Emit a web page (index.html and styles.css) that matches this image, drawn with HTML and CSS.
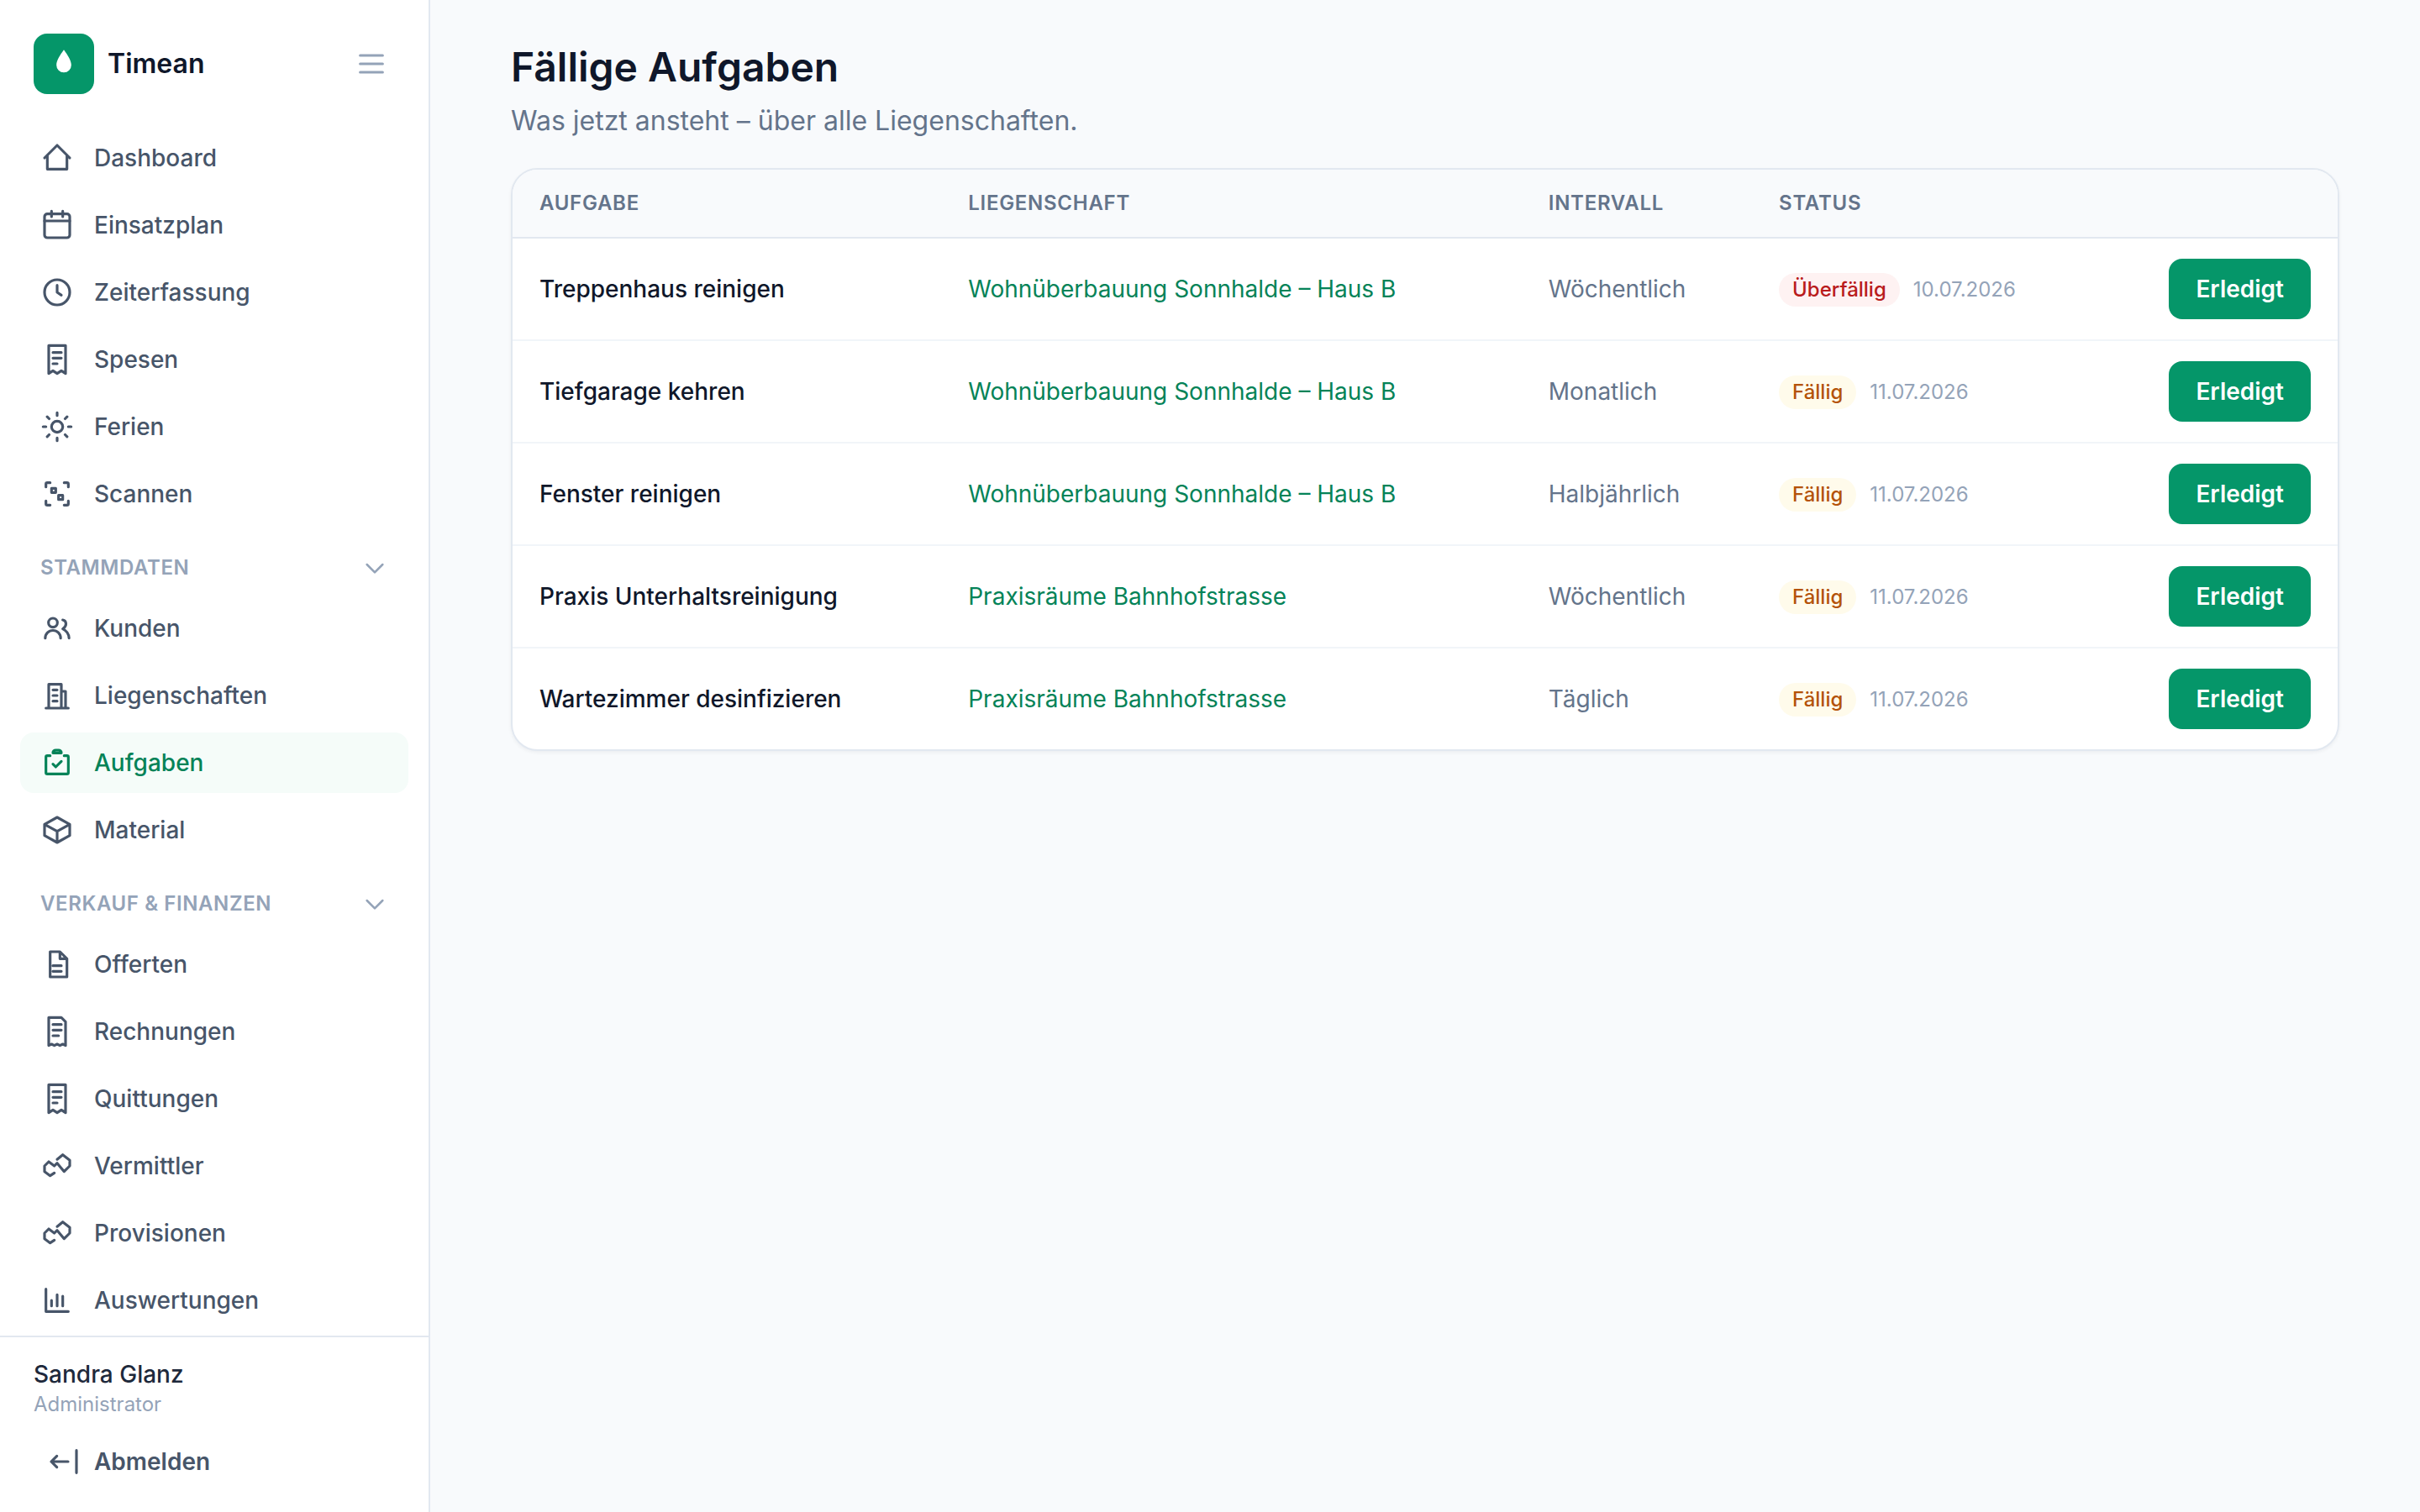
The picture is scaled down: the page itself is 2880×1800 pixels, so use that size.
FILE: index.html
```html
<!DOCTYPE html>
<html lang="de">

<head>
    <meta charset="UTF-8">
    <meta name="viewport" content="width=device-width, initial-scale=1.0">
    <title>Fällige Aufgaben – Timean</title>
    <link rel="stylesheet" href="styles.css">
</head>

<body>
    <div class="app">
        <aside class="sidebar">
            <div class="brand">
                <span class="brand-logo">
                    <svg viewBox="0 0 24 24"><path d="M12 2c2.8 4 5.3 7.5 5.3 10.9a5.3 5.3 0 0 1-10.6 0C6.7 9.5 9.2 6 12 2z"/></svg>
                </span>
                <span class="brand-name">Timean</span>
                <svg class="icon brand-toggle" viewBox="0 0 24 24"><path d="M4 6h16M4 12h16M4 18h16"/></svg>
            </div>
            <nav class="nav">
                <a class="nav-item">
                    <svg class="icon" viewBox="0 0 24 24"><path d="M3 12l9-9 9 9M5 10v10h14V10"/></svg>
                    Dashboard
                </a>
                <a class="nav-item">
                    <svg class="icon" viewBox="0 0 24 24"><rect x="3" y="4" width="18" height="17" rx="2"/><path d="M8 2v4M16 2v4M3 9h18"/></svg>
                    Einsatzplan
                </a>
                <a class="nav-item">
                    <svg class="icon" viewBox="0 0 24 24"><circle cx="12" cy="12" r="9"/><path d="M12 7v5l3 2"/></svg>
                    Zeiterfassung
                </a>
                <a class="nav-item">
                    <svg class="icon" viewBox="0 0 24 24"><path d="M6 2h12v20l-3-2-3 2-3-2-3 2zM9 7h6M9 11h6M9 15h3"/></svg>
                    Spesen
                </a>
                <a class="nav-item">
                    <svg class="icon" viewBox="0 0 24 24"><circle cx="12" cy="12" r="4"/><path d="M12 2v2M12 20v2M2 12h2M20 12h2M4.9 4.9l1.4 1.4M17.7 17.7l1.4 1.4M4.9 19.1l1.4-1.4M17.7 6.3l1.4-1.4"/></svg>
                    Ferien
                </a>
                <a class="nav-item">
                    <svg class="icon" viewBox="0 0 24 24"><path d="M4 7V5a1 1 0 0 1 1-1h2M17 4h2a1 1 0 0 1 1 1v2M20 17v2a1 1 0 0 1-1 1h-2M7 20H5a1 1 0 0 1-1-1v-2M8 8h3v3H8zM13 13h3v3h-3z"/></svg>
                    Scannen
                </a>

                <div class="nav-section">
                    Stammdaten
                    <svg class="icon" viewBox="0 0 24 24"><path d="M5 9l7 7 7-7"/></svg>
                </div>
                <a class="nav-item">
                    <svg class="icon" viewBox="0 0 24 24"><circle cx="9" cy="8" r="3.2"/><path d="M3.5 19a5.5 5.5 0 0 1 11 0M16 6c1.5.3 2.3 1.4 2.3 2.8 0 1.7-.9 2.6-2.3 3.6 2.7 1.3 4.3 3.6 4.5 6.6"/></svg>
                    Kunden
                </a>
                <a class="nav-item">
                    <svg class="icon" viewBox="0 0 24 24"><path d="M4 21h16M6 21V4h9v17M15 9h3v12M9 8h3M9 12h3M9 16h3"/></svg>
                    Liegenschaften
                </a>
                <a class="nav-item active">
                    <svg class="icon" viewBox="0 0 24 24"><path d="M7 7H5a1 1 0 0 0-1 1v11a1 1 0 0 0 1 1h14a1 1 0 0 0 1-1V8a1 1 0 0 0-1-1h-2M9 5a2 2 0 0 1 2-2h2a2 2 0 0 1 2 2zM9 13l2 2 4-4"/></svg>
                    Aufgaben
                </a>
                <a class="nav-item">
                    <svg class="icon" viewBox="0 0 24 24"><path d="M12 3l9 5v8l-9 5-9-5V8zM3 8l9 5 9-5M12 13v8"/></svg>
                    Material
                </a>

                <div class="nav-section">
                    Verkauf &amp; Finanzen
                    <svg class="icon" viewBox="0 0 24 24"><path d="M5 9l7 7 7-7"/></svg>
                </div>
                <a class="nav-item">
                    <svg class="icon" viewBox="0 0 24 24"><path d="M14 3H7v18h12V8zM14 3v5h5M9 13h6M9 17h6"/></svg>
                    Offerten
                </a>
                <a class="nav-item">
                    <svg class="icon" viewBox="0 0 24 24"><path d="M6 2h9l3 3v17l-2-1-2 1-2-1-2 1-2-1-2 1zM9 7h6M9 11h6M9 15h4"/></svg>
                    Rechnungen
                </a>
                <a class="nav-item">
                    <svg class="icon" viewBox="0 0 24 24"><path d="M6 2h12v20l-3-2-3 2-3-2-3 2zM9 7h6M9 11h6M9 15h3"/></svg>
                    Quittungen
                </a>
                <a class="nav-item">
                    <svg class="icon" viewBox="0 0 24 24"><path d="M12 7.3L16 4l5 4v4l-4 4-5-6-2 2-4-3-3 3v4l4 3 3-2"/></svg>
                    Vermittler
                </a>
                <a class="nav-item">
                    <svg class="icon" viewBox="0 0 24 24"><path d="M12 7.3L16 4l5 4v4l-4 4-5-6-2 2-4-3-3 3v4l4 3 3-2"/></svg>
                    Provisionen
                </a>
                <a class="nav-item">
                    <svg class="icon" viewBox="0 0 24 24"><path d="M4 4v16h16M8 12v4M12 8v8M16 9v7"/></svg>
                    Auswertungen
                </a>
            </nav>
            <div class="user">
                <div class="user-name">Sandra Glanz</div>
                <div class="user-role">Administrator</div>
                <button class="logout">
                    <svg class="icon" viewBox="0 0 24 24"><path d="M15 12H3M7 8l-4 4 4 4M21 4v16"/></svg>
                    Abmelden
                </button>
            </div>
        </aside>

        <main class="main">
            <h1>Fällige Aufgaben</h1>
            <p class="subtitle">Was jetzt ansteht – über alle Liegenschaften.</p>
            <div class="card">
                <table>
                    <thead>
                        <tr>
                            <th>Aufgabe</th>
                            <th>Liegenschaft</th>
                            <th>Intervall</th>
                            <th>Status</th>
                            <th></th>
                        </tr>
                    </thead>
                    <tbody>
                        <tr>
                            <td class="task">Treppenhaus reinigen</td>
                            <td><a class="link">Wohnüberbauung Sonnhalde – Haus B</a></td>
                            <td class="interval">Wöchentlich</td>
                            <td><span class="status"><span class="badge overdue">Überfällig</span><span class="date">10.07.2026</span></span></td>
                            <td class="action"><button class="btn">Erledigt</button></td>
                        </tr>
                        <tr>
                            <td class="task">Tiefgarage kehren</td>
                            <td><a class="link">Wohnüberbauung Sonnhalde – Haus B</a></td>
                            <td class="interval">Monatlich</td>
                            <td><span class="status"><span class="badge due">Fällig</span><span class="date">11.07.2026</span></span></td>
                            <td class="action"><button class="btn">Erledigt</button></td>
                        </tr>
                        <tr>
                            <td class="task">Fenster reinigen</td>
                            <td><a class="link">Wohnüberbauung Sonnhalde – Haus B</a></td>
                            <td class="interval">Halbjährlich</td>
                            <td><span class="status"><span class="badge due">Fällig</span><span class="date">11.07.2026</span></span></td>
                            <td class="action"><button class="btn">Erledigt</button></td>
                        </tr>
                        <tr>
                            <td class="task">Praxis Unterhaltsreinigung</td>
                            <td><a class="link">Praxisräume Bahnhofstrasse</a></td>
                            <td class="interval">Wöchentlich</td>
                            <td><span class="status"><span class="badge due">Fällig</span><span class="date">11.07.2026</span></span></td>
                            <td class="action"><button class="btn">Erledigt</button></td>
                        </tr>
                        <tr>
                            <td class="task">Wartezimmer desinfizieren</td>
                            <td><a class="link">Praxisräume Bahnhofstrasse</a></td>
                            <td class="interval">Täglich</td>
                            <td><span class="status"><span class="badge due">Fällig</span><span class="date">11.07.2026</span></span></td>
                            <td class="action"><button class="btn">Erledigt</button></td>
                        </tr>
                    </tbody>
                </table>
            </div>
        </main>
    </div>
</body>

</html>
```
FILE: styles.css
```css
* {
    box-sizing: border-box;
}

body {
    margin: 0;
    background-color: #f8fafc;
    color: #0f172a;
    font-family: Inter, "Liberation Sans", sans-serif;
    font-size: 28px;
    line-height: 40px;
}

button {
    border: 0;
    font: inherit;
    font-weight: 600;
}

.app {
    display: flex;
    height: 100vh;
}

.icon {
    flex: none;
    width: 40px;
    height: 40px;
    fill: none;
    stroke: currentColor;
    stroke-width: 1.9;
    stroke-linecap: round;
    stroke-linejoin: round;
}

/* sidebar */
.sidebar {
    display: flex;
    flex: none;
    flex-direction: column;
    width: 512px;
    border-right: 2px solid #e2e8f0;
    background-color: #fff;
}

.brand {
    display: flex;
    align-items: center;
    gap: 16px;
    padding: 40px 48px 40px 40px;
}

.brand-logo {
    display: flex;
    align-items: center;
    justify-content: center;
    width: 72px;
    height: 72px;
    border-radius: 16px;
    background-color: #059669;
}

.brand-logo svg {
    width: 40px;
    height: 40px;
    fill: #fff;
}

.brand-name {
    font-size: 32px;
    font-weight: 600;
}

.brand-toggle {
    margin-left: auto;
    color: #94a3b8;
}

.nav {
    display: flex;
    flex: 1;
    flex-direction: column;
    gap: 8px;
    min-height: 0;
    padding: 0 24px;
    overflow: hidden;
}

.nav-item {
    display: flex;
    flex: none;
    align-items: center;
    gap: 24px;
    height: 72px;
    padding: 0 24px;
    border-radius: 16px;
    color: #475569;
    font-weight: 500;
}

.nav-item.active {
    background-color: #f5fcf9;
    color: #058358;
}

.nav-section {
    display: flex;
    flex: none;
    align-items: center;
    justify-content: space-between;
    height: 48px;
    margin: 20px 0 4px;
    padding: 0 24px;
    color: #94a3b8;
    font-size: 24px;
    font-weight: 600;
    letter-spacing: 0.025em;
    text-transform: uppercase;
}

.nav-section .icon {
    width: 32px;
    height: 32px;
}

.user {
    padding: 24px;
    border-top: 2px solid #e2e8f0;
}

.user-name {
    padding: 0 16px;
    color: #1e293b;
    font-weight: 500;
}

.user-role {
    padding: 0 16px;
    color: #94a3b8;
    font-size: 24px;
    line-height: 32px;
}

.logout {
    display: flex;
    align-items: center;
    gap: 16px;
    width: 100%;
    height: 72px;
    margin-top: 16px;
    padding: 0 32px;
    background: none;
    color: #475569;
}

/* content */
.main {
    flex: 1;
    padding: 48px 96px;
}

h1 {
    margin: 0;
    font-size: 48px;
    font-weight: 600;
    line-height: 64px;
}

.subtitle {
    margin: 8px 0 32px;
    color: #64748b;
    font-size: 32px;
    line-height: 48px;
}

.card {
    overflow: hidden;
    border: 2px solid #e2e8f0;
    border-radius: 32px;
    background-color: #fff;
    box-shadow: 0 2px 4px rgba(15, 23, 42, 0.05);
}

table {
    width: 100%;
    border-collapse: separate;
    border-spacing: 0;
    text-align: left;
}

th {
    height: 82px;
    padding: 24px 32px;
    border-bottom: 2px solid #e2e8f0;
    background-color: #f8fafc;
    color: #64748b;
    font-size: 24px;
    font-weight: 600;
    line-height: 32px;
    letter-spacing: 0.03em;
    text-transform: uppercase;
}

td {
    padding: 24px 32px;
    border-bottom: 2px solid #f1f5f9;
    white-space: nowrap;
}

tr:last-child td {
    border-bottom: 0;
}

.task {
    font-weight: 500;
}

.link {
    color: #058358;
}

.interval {
    color: #64748b;
}

.status {
    display: flex;
    align-items: center;
    gap: 16px;
    padding-top: 2px;
    font-size: 24px;
    line-height: 32px;
}

.badge {
    padding: 4px 16px;
    border-radius: 20px;
    font-weight: 500;
}

.overdue {
    background-color: #fef2f2;
    color: #b91c1c;
}

.due {
    background-color: #fffbeb;
    color: #b45309;
}

.date {
    color: #94a3b8;
}

.action {
    text-align: right;
}

.btn {
    display: block;
    height: 72px;
    margin-left: auto;
    padding: 0 32px;
    border-radius: 16px;
    background-color: #059669;
    color: #fff;
}
```
